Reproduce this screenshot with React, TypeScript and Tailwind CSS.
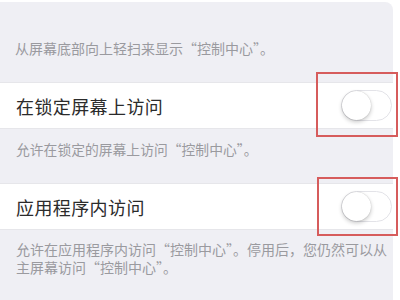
const font = { fontFamily: '"Noto Sans CJK SC", "Noto Sans", sans-serif' }

function Toggle() {
  return (
    <div className="w-[51px] h-[31px] rounded-full border border-[#e3e3e8] bg-white relative shrink-0">
      <div className="absolute left-0 top-0 w-[29px] h-[29px] rounded-full bg-white shadow-[0_2px_4px_rgba(0,0,0,0.22),0_0_1px_rgba(0,0,0,0.25)]" />
    </div>
  )
}

function Row({ title }: { title: string }) {
  return (
    <div className="h-[47px] bg-white flex items-center justify-between pl-4 pr-[1px] border-y border-[#e6e6ea]">
      <span className="text-[18px] tracking-[0.4px] text-[#2b2b2b] leading-none">{title}</span>
      <Toggle />
    </div>
  )
}

export default function App() {
  return (
    <div className="w-[400px] h-[300px] bg-white pt-[2px] pr-[7px] overflow-hidden relative" style={font}>
      <div className="h-full bg-[#efeff4] rounded-tr-lg">
        <div className="h-[80px] pt-[36px] pl-[15px] text-[14px] leading-[20px] text-[#9a9a9f]">
          从屏幕底部向上轻扫来显示“控制中心”。
        </div>
        <Row title="在锁定屏幕上访问" />
        <div className="h-[54px] pt-[10px] pl-4 text-[13.8px] leading-[20px] text-[#9a9a9f]">
          允许在锁定的屏幕上访问“控制中心”。
        </div>
        <Row title="应用程序内访问" />
        <div className="pt-[10px] pl-4 text-[14px] leading-[18px] text-[#9a9a9f] whitespace-nowrap">
          <div>允许在应用程序内访问“控制中心”。停用后，您仍然可以从</div>
          <div>主屏幕访问“控制中心”。</div>
        </div>
      </div>
      <div className="absolute left-[316px] top-[72px] w-[82px] h-[65px] border-2 border-[#d65c5c]" />
      <div className="absolute left-[317px] top-[177px] w-[81px] h-[59px] border-2 border-[#d65c5c]" />
    </div>
  )
}
